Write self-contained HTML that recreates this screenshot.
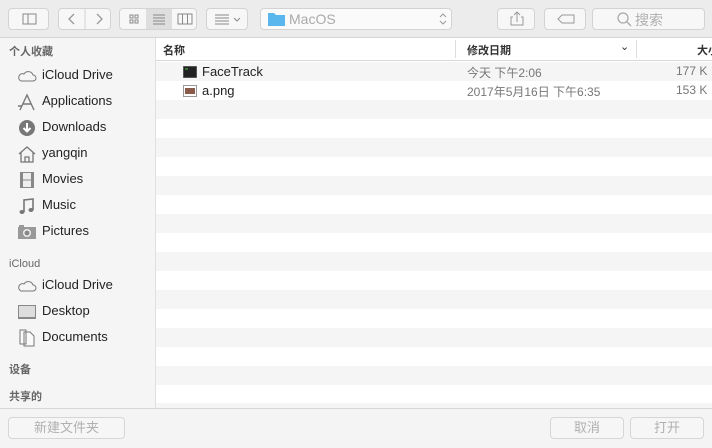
<!DOCTYPE html>
<html><head><meta charset="utf-8"><style>
*{margin:0;padding:0;box-sizing:border-box}
body{width:712px;height:448px;overflow:hidden;background:#f4f4f4;font-family:"Liberation Sans","Noto Sans CJK SC",sans-serif;font-size:13px;color:#222;position:relative}
span,div{white-space:nowrap}
.tb{position:absolute;left:0;top:0;width:712px;height:38px;background:#ececec;border-bottom:1px solid #d4d4d4}
.btn{position:absolute;top:8px;height:22px;border:1px solid #d3d3d3;border-radius:4px;background:#f7f7f7}
.side{position:absolute;left:0;top:38px;width:156px;height:370px;background:#f5f5f5;border-right:1px solid #e0e0e0}
.hd{position:absolute;left:9px;font-size:11px;color:#666;font-weight:bold}
.it{position:absolute;left:42px;font-size:13px;color:#222}
.ic{position:absolute;left:17px;width:20px;height:18px}
.main{position:absolute;left:156px;top:38px;width:556px;height:370px;background:#fff;overflow:hidden}
.colh{position:absolute;top:0;left:0;width:556px;height:23px;background:#fff;border-bottom:1px solid #d8d8d8;font-size:11px;font-weight:bold;color:#333}
.row{position:absolute;left:0;width:556px;height:19px}
.g{background:#f5f5f5}
.foot{position:absolute;left:0;top:408px;width:712px;height:40px;background:#f4f4f4;border-top:1px solid #d6d6d6}
.fb{position:absolute;top:8px;height:22px;border:1px solid #d6d6d6;border-radius:4px;background:#f6f6f6;color:#b0b0b0;font-size:13px;text-align:center;line-height:20px}
</style></head><body>
<div class="tb">
 <div class="btn" style="left:8px;width:41px"><svg width="41" height="20"><rect x="14" y="5" width="13" height="10" fill="none" stroke="#888"/><line x1="19" y1="5" x2="19" y2="15" stroke="#888"/></svg></div>
 <div class="btn" style="left:58px;width:53px"><svg width="53" height="20"><path d="M15 5l-5 5 5 5M38 5l5 5-5 5" fill="none" stroke="#999" stroke-width="1.3"/><line x1="26" y1="0" x2="26" y2="20" stroke="#d3d3d3"/></svg></div>
 <div class="btn" style="left:119px;width:78px;overflow:hidden"><svg width="78" height="20"><rect x="26" y="0" width="26" height="20" fill="#dedede"/><g fill="none" stroke="#888"><rect x="10" y="6" width="3" height="3"/><rect x="15" y="6" width="3" height="3"/><rect x="10" y="11" width="3" height="3"/><rect x="15" y="11" width="3" height="3"/><path d="M33 6h12M33 9h12M33 12h12M33 15h12"/><rect x="58" y="5" width="14" height="10"/><path d="M62.5 5v10M67.5 5v10"/></g></svg></div>
 <div class="btn" style="left:206px;width:42px"><svg width="42" height="20"><g fill="none" stroke="#888"><path d="M8 6h14M8 9h14M8 12h14M8 15h14"/><path d="M27 9l3 3 3-3"/></g></svg></div>
 <div class="btn" style="left:260px;width:192px;background:#fafafa"><svg width="20" height="20" style="position:absolute;left:6px;top:1px"><path d="M1 3h6l2 2h9v11H1z" fill="#5ab7ee"/></svg><span style="position:absolute;left:28px;top:2px;color:#aaa;font-size:14px">MacOS</span><svg width="10" height="16" style="position:absolute;left:177px;top:2px"><path d="M2 6l3-3 3 3M2 10l3 3 3-3" fill="none" stroke="#999"/></svg></div>
 <div class="btn" style="left:497px;width:38px"><svg width="38" height="20"><path d="M19 3v10M16 6l3-3 3 3M15 8h-2v8h12V8h-2" fill="none" stroke="#999"/></svg></div>
 <div class="btn" style="left:544px;width:42px"><svg width="42" height="20"><path d="M13 10l4-4h12v8H17z" fill="none" stroke="#999"/></svg></div>
 <div class="btn" style="left:592px;width:113px"><svg width="20" height="20" style="position:absolute;left:22px;top:1px"><circle cx="8" cy="8" r="5" fill="none" stroke="#aaa" stroke-width="1.3"/><path d="M12 12l4 4" stroke="#aaa" stroke-width="1.3"/></svg><span style="position:absolute;left:42px;top:1px;color:#b0b0b0;font-size:14px">搜索</span></div>
</div>
<div class="side">
 <div class="hd" style="top:5px">个人收藏</div>
 <svg class="ic" style="top:29px" viewBox="0 0 20 18"><path d="M4 14h12a3 3 0 0 0 0-6 5 5 0 0 0-9-1 3.5 3.5 0 0 0-3 7z" fill="none" stroke="#777"/></svg><div class="it" style="top:29px">iCloud Drive</div>
 <svg class="ic" style="top:55px" viewBox="0 0 20 18"><path d="M3 17L10 2l7 15M6 11h8M1 13h4" fill="none" stroke="#777" stroke-width="1.4"/></svg><div class="it" style="top:55px">Applications</div>
 <svg class="ic" style="top:81px" viewBox="0 0 20 18"><circle cx="10" cy="9" r="8" fill="#777"/><path d="M10 4v8M6.5 9l3.5 3.5 3.5-3.5" fill="none" stroke="#fff" stroke-width="2"/></svg><div class="it" style="top:81px">Downloads</div>
 <svg class="ic" style="top:107px" viewBox="0 0 20 18"><path d="M2 9l8-7 8 7M4 7v10h12V7M8 17v-5h4v5" fill="none" stroke="#777" stroke-width="1.3"/></svg><div class="it" style="top:107px">yangqin</div>
 <svg class="ic" style="top:133px" viewBox="0 0 20 18"><rect x="3" y="1" width="14" height="16" fill="#888"/><rect x="6" y="2" width="8" height="6.5" fill="#eee"/><rect x="6" y="9.5" width="8" height="6.5" fill="#eee"/></svg><div class="it" style="top:133px">Movies</div>
 <svg class="ic" style="top:159px" viewBox="0 0 20 18"><path d="M7 15V3l9-1v11" fill="none" stroke="#777" stroke-width="1.6"/><ellipse cx="5" cy="15" rx="2.5" ry="2" fill="#777"/><ellipse cx="14" cy="13" rx="2.5" ry="2" fill="#777"/></svg><div class="it" style="top:159px">Music</div>
 <svg class="ic" style="top:185px" viewBox="0 0 20 18"><rect x="1" y="4" width="18" height="12" fill="#999"/><rect x="2" y="2" width="5" height="3" fill="#999"/><circle cx="10" cy="10" r="4" fill="#eee"/><circle cx="10" cy="10" r="2.5" fill="#888"/></svg><div class="it" style="top:185px">Pictures</div>
 <div class="hd" style="top:220px;font-weight:normal">iCloud</div>
 <svg class="ic" style="top:239px" viewBox="0 0 20 18"><path d="M4 14h12a3 3 0 0 0 0-6 5 5 0 0 0-9-1 3.5 3.5 0 0 0-3 7z" fill="none" stroke="#777"/></svg><div class="it" style="top:239px">iCloud Drive</div>
 <svg class="ic" style="top:265px" viewBox="0 0 20 18"><rect x="1" y="2" width="18" height="14" fill="#888"/><rect x="2" y="3" width="16" height="11" fill="#ddd"/></svg><div class="it" style="top:265px">Desktop</div>
 <svg class="ic" style="top:291px" viewBox="0 0 20 18"><path d="M7 3h6l4 4v10H7z M3 1h6v14H3z" fill="#fafafa" stroke="#777"/></svg><div class="it" style="top:291px">Documents</div>
 <div class="hd" style="top:323px">设备</div>
 <div class="hd" style="top:350px">共享的</div>
</div>
<div class="main">
 <div class="row g" style="top:24px"></div>
 <div class="row g" style="top:62px"></div><div class="row g" style="top:100px"></div><div class="row g" style="top:138px"></div><div class="row g" style="top:176px"></div><div class="row g" style="top:214px"></div><div class="row g" style="top:252px"></div><div class="row g" style="top:290px"></div><div class="row g" style="top:328px"></div><div class="row g" style="top:365px"></div>
 <div class="colh"><span style="position:absolute;left:7px;top:4px">名称</span><div style="position:absolute;left:299px;top:2px;width:1px;height:18px;background:#ddd"></div><span style="position:absolute;left:311px;top:4px">修改日期</span><span style="position:absolute;left:464px;top:2px;font-weight:normal">⌄</span><div style="position:absolute;left:480px;top:2px;width:1px;height:18px;background:#ddd"></div><span style="position:absolute;left:541px;top:4px">大小</span></div>
 <svg style="position:absolute;left:27px;top:28px" width="14" height="12"><rect x="0" y="0" width="14" height="12" fill="#222" stroke="#888"/><path d="M2 3h3" stroke="#4c4"/></svg>
 <div style="position:absolute;left:46px;top:26px">FaceTrack</div>
 <div style="position:absolute;left:311px;top:26px;color:#777;font-size:12px">今天 下午2:06</div>
 <div style="position:absolute;left:520px;top:26px;color:#777;font-size:12px">177 K</div>
 <svg style="position:absolute;left:27px;top:47px" width="14" height="12"><rect x="0.5" y="0.5" width="13" height="11" fill="#fff" stroke="#999"/><rect x="2" y="3" width="10" height="6" fill="#8a5a4a"/></svg>
 <div style="position:absolute;left:46px;top:45px">a.png</div>
 <div style="position:absolute;left:311px;top:45px;color:#777;font-size:12px">2017年5月16日 下午6:35</div>
 <div style="position:absolute;left:520px;top:45px;color:#777;font-size:12px">153 K</div>
</div>
<div class="foot">
 <div class="fb" style="left:8px;width:117px">新建文件夹</div>
 <div class="fb" style="left:550px;width:74px">取消</div>
 <div class="fb" style="left:630px;width:74px">打开</div>
</div>
</body></html>
